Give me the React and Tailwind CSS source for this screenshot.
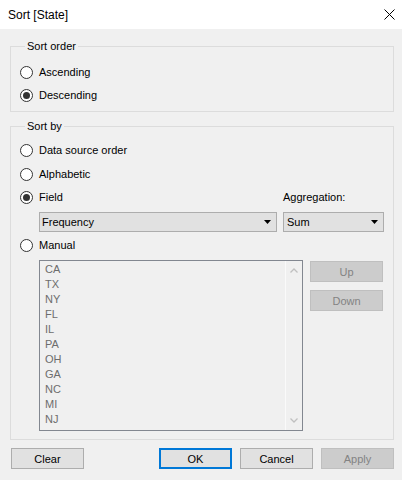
import React from "react";

const FONT = { fontFamily: '"Liberation Sans", Arial, sans-serif' };

function Radio({ checked, label }) {
  return (
    <div className="flex h-[16px] items-center">
      <span className="flex h-[13px] w-[13px] items-center justify-center rounded-full border border-[#333333] bg-white">
        {checked && <span className="h-[7px] w-[7px] rounded-full bg-[#333333]" />}
      </span>
      <span className="ml-[6px] leading-[16px] text-black">{label}</span>
    </div>
  );
}

function Caret() {
  return (
    <svg width="7" height="4" viewBox="0 0 7 4" className="block">
      <path d="M0 0 L7 0 L3.5 4 Z" fill="#000" />
    </svg>
  );
}

function Dropdown({ value, className }) {
  return (
    <div className={"flex h-[20px] items-center justify-between border border-[#adadad] bg-[#e1e1e1] pl-[2px] pr-[5px] " + className}>
      <span className="leading-[18px] text-black">{value}</span>
      <Caret />
    </div>
  );
}

function Button({ children, variant = "normal", className = "" }) {
  const styles = {
    normal: "border border-[#adadad] bg-[#e1e1e1] text-black",
    primary: "border-2 border-[#0078d7] bg-[#e1e1e1] text-black",
    disabled: "border border-[#bfbfbf] bg-[#cccccc] text-[#838383]",
  };
  return (
    <div className={"flex h-[21px] w-[73px] items-center justify-center leading-[16px] " + styles[variant] + " " + className}>
      {children}
    </div>
  );
}

const STATES = ["CA", "TX", "NY", "FL", "IL", "PA", "OH", "GA", "NC", "MI", "NJ"];

export default function App() {
  return (
    <div style={FONT} className="flex h-[480px] w-[402px] flex-col bg-[#f0f0f0] text-[11px]">
      {/* Title bar */}
      <div className="flex h-[29px] items-center justify-between bg-white pl-[8px] pr-[7px]">
        <span className="text-[12px] leading-[16px] text-black">Sort [State]</span>
        <svg width="11" height="11" viewBox="0 0 11 11" className="block">
          <path d="M0.5 0.5 L10.5 10.5 M10.5 0.5 L0.5 10.5" stroke="#000" strokeWidth="1" />
        </svg>
      </div>

      {/* Sort order */}
      <fieldset className="ml-[10px] mr-[8px] mt-[9px] border border-[#dcdcdc] px-[9px] pb-[8px] pt-[9px]">
        <legend className="ml-[5px] px-[2px] leading-[17px] text-black">Sort order</legend>
        <div className="flex flex-col gap-[7px]">
          <Radio label="Ascending" />
          <Radio checked label="Descending" />
        </div>
      </fieldset>

      {/* Sort by */}
      <fieldset className="ml-[10px] mr-[8px] mt-[6px] border border-[#dcdcdc] px-[9px] pb-[8px] pt-[7px]">
        <legend className="ml-[5px] px-[2px] leading-[17px] text-black">Sort by</legend>
        <div className="flex flex-col">
          <Radio label="Data source order" />
          <div className="mt-[8px]">
            <Radio label="Alphabetic" />
          </div>
          <div className="mt-[7px] flex h-[16px] items-center justify-between">
            <Radio checked label="Field" />
            <span className="w-[101px] leading-[16px] text-black">Aggregation:</span>
          </div>
          <div className="ml-[19px] mt-[7px] flex gap-[6px]">
            <Dropdown value="Frequency" className="w-[238px]" />
            <Dropdown value="Sum" className="w-[101px] pl-[3px]" />
          </div>
          <div className="mt-[5px]">
            <Radio label="Manual" />
          </div>
          <div className="ml-[19px] mt-[7px] flex gap-[7px]">
            <div className="flex h-[171px] w-[264px] border border-[#828790] bg-[#f0f0f0]">
              <div className="flex flex-1 flex-col pl-[5px] pt-[1px]">
                {STATES.map((s) => (
                  <div key={s} className="h-[15px] leading-[15px] text-[#6d6d6d]">
                    {s}
                  </div>
                ))}
              </div>
              <div className="flex w-[17px] flex-col items-center justify-between border-l border-[#fafafa] py-[7px]">
                <svg width="8" height="5" viewBox="0 0 8 5" className="block">
                  <path d="M0.5 4.5 L4 1 L7.5 4.5" stroke="#c0c0c0" strokeWidth="1.3" fill="none" />
                </svg>
                <svg width="8" height="5" viewBox="0 0 8 5" className="block">
                  <path d="M0.5 0.5 L4 4 L7.5 0.5" stroke="#c0c0c0" strokeWidth="1.3" fill="none" />
                </svg>
              </div>
            </div>
            <div className="mt-[1px] flex flex-col gap-[8px]">
              <Button variant="disabled">Up</Button>
              <Button variant="disabled">Down</Button>
            </div>
          </div>
        </div>
      </fieldset>

      {/* Bottom buttons */}
      <div className="mt-[8px] flex pl-[11px] pr-[8px]">
        <Button>Clear</Button>
        <div className="flex-1" />
        <div className="flex gap-[8px]">
          <Button variant="primary">OK</Button>
          <Button>Cancel</Button>
          <Button variant="disabled">Apply</Button>
        </div>
      </div>
    </div>
  );
}
